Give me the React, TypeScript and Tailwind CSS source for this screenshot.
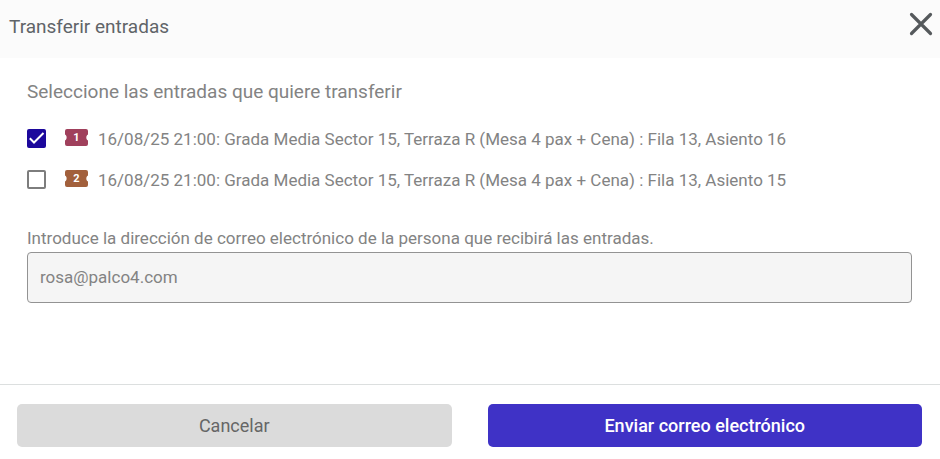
import { useState } from 'react';
import { clsx } from 'clsx';

const tickets = [
  { id: 1, color: "text-[#a0405c]", label: "16/08/25 21:00: Grada Media Sector 15, Terraza R (Mesa 4 pax + Cena) : Fila 13, Asiento 16" },
  { id: 2, color: "text-[#a2603c]", label: "16/08/25 21:00: Grada Media Sector 15, Terraza R (Mesa 4 pax + Cena) : Fila 13, Asiento 15" },
];

function CloseIcon() {
  return (
    <svg viewBox="0 0 24 24" className="size-6" fill="none" stroke="currentColor" strokeWidth="3.2" strokeLinecap="round" aria-hidden="true">
      <path d="M2.500 2.500L21.500 21.500M21.500 2.500L2.500 21.500" />
    </svg>
  );
}

function TicketBadge({ number, color }: { number: number; color: string }) {
  return (
    <span className={clsx("grid h-[17px] w-[23px] place-items-center", color)}>
      <svg viewBox="0 0 23 17" className="col-start-1 row-start-1 h-[17px] w-[23px]" fill="currentColor" aria-hidden="true">
        <path d="M2 0H21Q23 0 23 2V5.500C20.800 6.500 20.800 10.500 23 11.500V15Q23 17 21 17H2Q0 17 0 15V11.500C2.200 10.500 2.200 6.500 0 5.500V2Q0 0 2 0Z" />
      </svg>
      <span className="col-start-1 row-start-1 text-[11px] leading-4 font-bold text-white">{number}</span>
    </span>
  );
}

function TicketRow({ ticket, checked, onChange }: {
  ticket: (typeof tickets)[number];
  checked: boolean;
  onChange: () => void;
}) {
  return (
    <li>
      <label className="flex items-center text-[17px] leading-5">
        <span className="mr-[19px] mb-px grid size-[19px] shrink-0">
          <input
            type="checkbox"
            checked={checked}
            onChange={onChange}
            className="col-start-1 row-start-1 size-[19px] appearance-none rounded-xs border-2 border-[#7d7d7d] bg-white checked:border-[#1c089c] checked:bg-[#1c089c]"
          />
          {checked && (
            <svg viewBox="0 0 19 19" className="pointer-events-none col-start-1 row-start-1 size-[19px]" fill="none" stroke="white" strokeWidth="2" aria-hidden="true">
              <path d="M2.800 9.300L7 13.500L16.500 4" />
            </svg>
          )}
        </span>
        <span className="mr-[10px] mb-[3px] shrink-0">
          <TicketBadge number={ticket.id} color={ticket.color} />
        </span>
        <span>{ticket.label}</span>
      </label>
    </li>
  );
}

export default function App() {
  const [selected, setSelected] = useState<number[]>([1]);
  const [email, setEmail] = useState("rosa@palco4.com");

  const toggle = (id: number) => {
    setSelected((prev) => (prev.includes(id) ? prev.filter((item) => item !== id) : [...prev, id]));
  };

  return (
    <form
      className="flex min-h-screen flex-col bg-white font-[Roboto,sans-serif] text-[#838383]"
      onSubmit={(e) => e.preventDefault()}
    >
      <header className="flex h-[58px] items-start justify-between bg-[#fbfbfb] pr-[7px] pl-[9px]">
        <h1 className="pt-[15px] text-[19px] leading-6 text-[#606468]">Transferir entradas</h1>
        <button type="button" aria-label="Cerrar" className="mt-3 text-[#55595c]">
          <CloseIcon />
        </button>
      </header>

      <main className="flex-1 px-7 pt-[22px] pl-[27px]">
        <h2 className="text-[19px] leading-6">Seleccione las entradas que quiere transferir</h2>

        <ul className="mt-[25px] space-y-[21px]">
          {tickets.map((ticket) => (
            <TicketRow
              key={ticket.id}
              ticket={ticket}
              checked={selected.includes(ticket.id)}
              onChange={() => toggle(ticket.id)}
            />
          ))}
        </ul>

        <label htmlFor="email" className="mt-9 block text-[17px] leading-6">
          Introduce la dirección de correo electrónico de la persona que recibirá las entradas.
        </label>
        <input
          id="email"
          type="email"
          value={email}
          onChange={(e) => setEmail(e.target.value)}
          className="mt-0.5 block h-[51px] w-full rounded-sm border border-[#939393] bg-[#f5f5f5] px-3 pb-0.5 text-[17px]"
        />
      </main>

      <footer className="grid grid-cols-2 gap-9 border-t border-[#dcdfdf] pt-[19px] pr-[18px] pb-3 pl-[17px]">
        <button type="button" className="h-[43px] rounded-[5px] bg-[#dbdbdb] text-lg text-[#666666]">
          Cancelar
        </button>
        <button type="submit" className="h-[43px] rounded-[5px] bg-[#3f32c6] text-lg font-medium text-white">
          Enviar correo electrónico
        </button>
      </footer>
    </form>
  );
}
